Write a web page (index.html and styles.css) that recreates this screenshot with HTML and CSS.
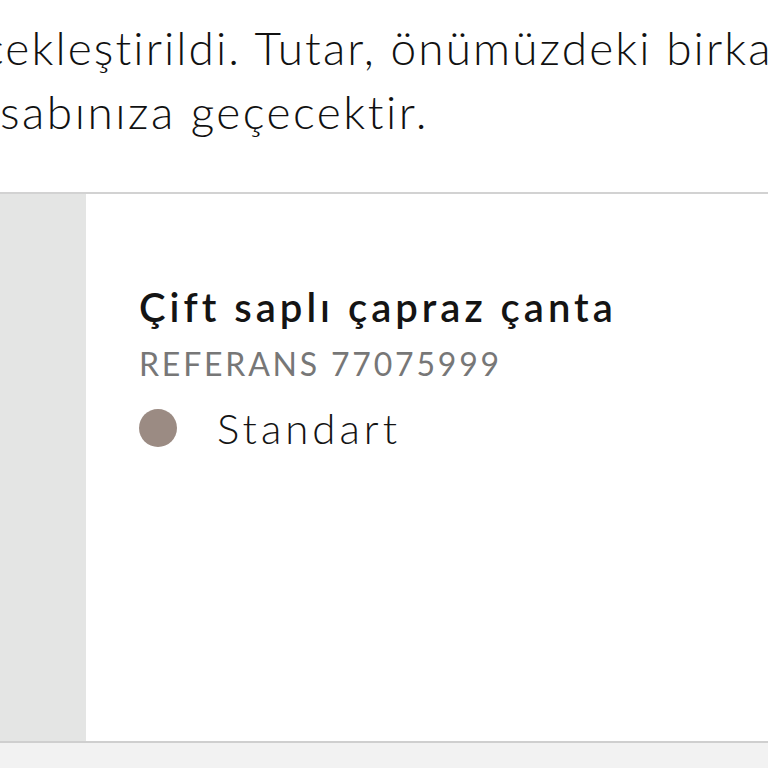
FILE: index.html
```html
<!DOCTYPE html>
<html lang="tr">
<head>
<meta charset="utf-8">
<link rel="stylesheet" href="styles.css">
</head>
<body>
<div class="page">
  <div class="message">
    <p class="line">çekleştirildi. Tutar, önümüzdeki birkaç gün içinde</p>
    <p class="line line-2">sabınıza geçecektir.</p>
  </div>
  <div class="card">
    <div class="thumb"></div>
    <div class="info">
      <h2 class="title">Çift saplı çapraz çanta</h2>
      <div class="ref">REFERANS 77075999</div>
      <div class="variant">
        <span class="swatch"></span>
        <span class="variant-name">Standart</span>
      </div>
    </div>
  </div>
  <div class="footer"></div>
</div>
</body>
</html>
```

FILE: styles.css
```css
html, body {
  margin: 0;
  padding: 0;
  background: #ffffff;
  overflow: hidden;
}
.page {
  width: 768px;
  height: 768px;
  display: flex;
  flex-direction: column;
  font-family: "Lato", "Noto Sans", sans-serif;
  color: #111111;
}
.message {
  height: 192px;
  padding-top: 16px;
  box-sizing: border-box;
  overflow: hidden;
}
.line {
  margin: 0 0 0 -18px;
  white-space: nowrap;
  font-size: 46px;
  font-weight: 300;
  line-height: 64px;
  letter-spacing: 2.1px;
}
.line-2 {
  margin-left: 0;
  letter-spacing: 2.5px;
}
.card {
  display: flex;
  height: 551px;
  border-top: 2px solid #d2d2d2;
  border-bottom: 2px solid #cfcfcf;
  box-sizing: border-box;
}
.thumb {
  width: 86px;
  background: #e4e5e4;
}
.info {
  flex: 1;
  padding: 89px 0 0 53px;
}
.title {
  margin: 0;
  font-size: 40px;
  font-weight: 600;
  line-height: 48px;
  letter-spacing: 4px;
  color: #141414;
}
.ref {
  margin-top: 14px;
  font-size: 32px;
  line-height: 38px;
  letter-spacing: 2.8px;
  color: #777777;
}
.variant {
  display: flex;
  align-items: center;
  gap: 40px;
  margin-top: 21px;
}
.swatch {
  width: 38px;
  height: 38px;
  border-radius: 50%;
  background: #9b8b83;
}
.variant-name {
  font-size: 42px;
  font-weight: 300;
  line-height: 48px;
  letter-spacing: 4px;
  color: #141414;
}
.footer {
  flex: 1;
  background: #f2f2f2;
}
```
